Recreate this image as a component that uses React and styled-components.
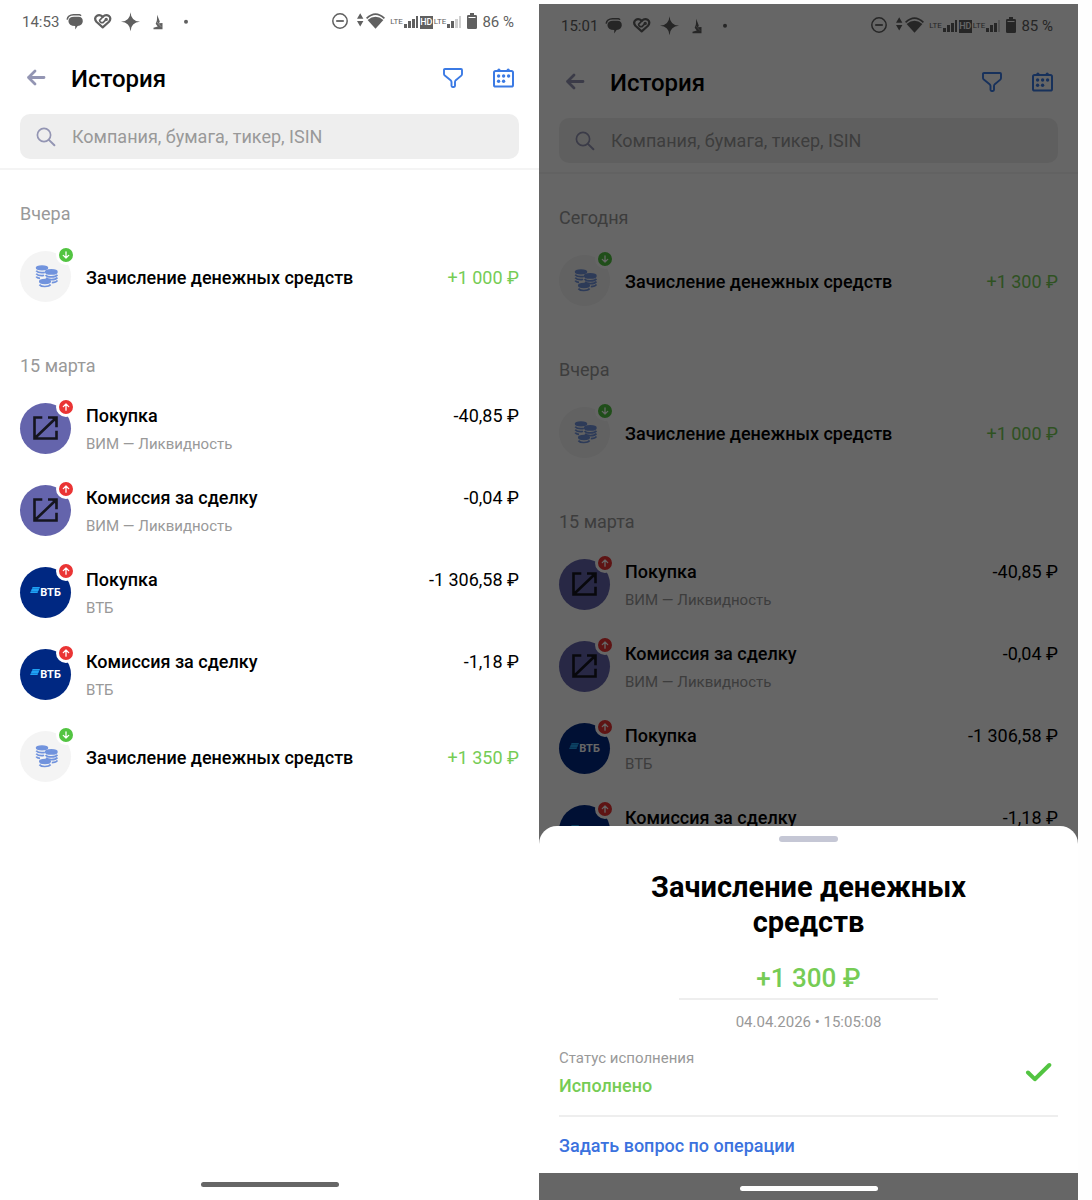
import React from 'react';
import styled, { createGlobalStyle } from 'styled-components';

const GlobalStyle = createGlobalStyle`
  * {
    box-sizing: border-box;
  }
  body {
    margin: 0;
    background: #fefefe;
    font-family: Roboto, 'Noto Sans', sans-serif;
    color: #000;
  }
`;

const Page = styled.main`
  display: grid;
  grid-template-columns: 1fr 1fr;
  min-height: 100vh;
  padding-right: 14px;
`;

const Phone = styled.section`
  position: relative;
  display: flex;
  flex-direction: column;
  overflow: hidden;
  margin-top: ${props => (props.$lowered ? '4px' : '0')};
  background: #fff;
`;

const StatusBar = styled.div`
  display: flex;
  justify-content: space-between;
  align-items: center;
  height: 44px;
  padding: 0 25px 0 22px;
  font-size: 15px;
  color: #606060;
`;

const StatusGroup = styled.div`
  display: flex;
  align-items: center;
  gap: ${props => props.$gap || '0'};

  svg {
    display: block;
    flex: none;
  }
`;

const Lte = styled.span`
  font-size: 8px;
  line-height: 12px;
`;

const Hd = styled.span`
  width: 13px;
  font-size: 9px;
  font-weight: 500;
  line-height: 13px;
  text-align: center;
  background: #606060;
  color: #fff;
`;

const Header = styled.header`
  padding: 0 20px 9px;
  border-bottom: 2px solid #f4f4f4;
`;

const Toolbar = styled.div`
  display: flex;
  align-items: center;
  height: 68px;
  margin-bottom: 2px;
`;

const Title = styled.h1`
  flex: 1;
  margin: 0 0 0 20px;
  padding-top: 2px;
  font-size: 24px;
  font-weight: 500;
  line-height: 28px;
`;

const IconButton = styled.button`
  display: flex;
  justify-content: center;
  align-items: center;
  width: 31px;
  height: 32px;
  margin-left: ${props => (props.$spaced ? '20px' : '0')};
  padding: 0;
  border: 0;
  background: none;
  color: ${props => props.$color};
`;

const SearchBox = styled.label`
  display: flex;
  align-items: center;
  gap: 16px;
  height: 45px;
  padding: 0 16px;
  border-radius: 10px;
  background: #eee;
  color: #9395b3;
`;

const SearchInput = styled.input`
  flex: 1;
  min-width: 0;
  padding: 0;
  border: 0;
  outline: 0;
  background: none;
  font: inherit;
  font-size: 18px;
  line-height: 28px;

  &::placeholder {
    color: #999;
    opacity: 1;
  }
`;

const Feed = styled.div`
  display: flex;
  flex-direction: column;
  gap: 28px;
  padding: 23px 20px;
`;

const DayTitle = styled.h2`
  margin: 0;
  font-size: 18px;
  font-weight: 400;
  line-height: 42px;
  color: #999;
`;

const Rows = styled.ul`
  margin: 0;
  padding: 0;
  list-style: none;
`;

const Row = styled.li`
  display: flex;
  align-items: center;
  gap: 15px;
  height: 82px;
`;

const Avatar = styled.div`
  position: relative;
  display: flex;
  justify-content: center;
  align-items: center;
  width: 51px;
  height: 51px;
  border-radius: 50%;
  background: ${props => props.$bg};
`;

const Badge = styled.span`
  position: absolute;
  top: -6px;
  right: -5px;
  display: flex;
  justify-content: center;
  align-items: center;
  width: 20px;
  height: 20px;
  border: 3px solid #fff;
  border-radius: 50%;
  background: ${props => (props.$incoming ? '#52c441' : '#ea3434')};
`;

const VtbMark = styled.span`
  display: flex;
  align-items: center;
  padding-top: 2px;
  font-size: 11px;
  font-weight: 700;
  line-height: 12px;
  color: #fff;

  svg {
    margin-bottom: 6px;
  }
`;

const RowBody = styled.div`
  flex: 1;
  padding-top: 4px;
`;

const RowLine = styled.div`
  display: flex;
  justify-content: space-between;
  font-size: 18px;
  line-height: 28px;
`;

const RowTitle = styled.span`
  font-weight: 500;
`;

const Amount = styled.span`
  color: ${props => (props.$incoming ? '#76cc55' : '#000')};
`;

const RowNote = styled.div`
  font-size: 15px;
  line-height: 28px;
  color: #999;
`;

const GestureBar = styled.div`
  display: flex;
  justify-content: center;
  align-items: center;
  height: 31px;
  margin-top: auto;

  &::after {
    content: '';
    width: 138px;
    height: 5px;
    border-radius: 3px;
    background: #666;
  }
`;

const Backdrop = styled.div`
  position: absolute;
  inset: 0;
  display: flex;
  flex-direction: column;
  justify-content: flex-end;
  background: rgba(0, 0, 0, 0.6);
`;

const BackdropGesture = styled(GestureBar)`
  height: 27px;
  margin-top: 0;
  padding-top: 4px;

  &::after {
    background: #fff;
  }
`;

const Sheet = styled.div`
  display: flex;
  flex-direction: column;
  padding: 10px 20px 13px;
  border-radius: 18px 18px 0 0;
  background: #fff;
`;

const Grip = styled.span`
  align-self: center;
  width: 59px;
  height: 6px;
  border-radius: 3px;
  background: #c5c7d5;
`;

const SheetTitle = styled.h2`
  width: 340px;
  max-width: 100%;
  margin: 28px auto 0;
  font-size: 29px;
  font-weight: 700;
  line-height: 35px;
  text-align: center;
`;

const SheetAmount = styled.div`
  align-self: center;
  min-width: 52%;
  margin-top: 20px;
  padding-bottom: 2px;
  border-bottom: 2px solid #eee;
  font-size: 26px;
  font-weight: 500;
  line-height: 36px;
  text-align: center;
  color: #76cc55;
`;

const SheetDate = styled.time`
  margin-top: 8px;
  font-size: 15px;
  line-height: 28px;
  text-align: center;
  color: #999;
`;

const StatusRow = styled.div`
  display: flex;
  justify-content: space-between;
  align-items: center;
  margin-top: 8px;
  padding: 0 6px 15px 0;
  border-bottom: 2px solid #eee;
`;

const StatusLabel = styled.div`
  font-size: 15px;
  line-height: 28px;
  color: #999;
`;

const StatusValue = styled.div`
  font-size: 18px;
  font-weight: 500;
  line-height: 28px;
  color: #76cc55;
`;

const AskLink = styled.a`
  align-self: flex-start;
  margin-top: 15px;
  font-size: 18px;
  font-weight: 500;
  line-height: 28px;
  text-decoration: none;
  color: #3b72de;
`;

const ArrowLeft = () => (
  <svg width="20" height="18" viewBox="0 0 20 18" fill="none" stroke="currentColor" strokeWidth="2.8" strokeLinecap="round" strokeLinejoin="round">
    <path d="M18 8.5H2.5M9 2L2.5 8.5L9 15" />
  </svg>
);

const FilterIcon = () => (
  <svg width="20" height="20" viewBox="0 0 20 20" fill="none" stroke="currentColor" strokeWidth="1.9" strokeLinejoin="round">
    <path d="M2 1H18Q19 1 19 2V6Q19 7 18.3 7.6L12.8 12.2Q12 13 12 14V17.8Q12 19 11 19H9.6Q8.5 19 8.5 17.8V14Q8.5 13 7.6 12.2L1.8 7.6Q1 7 1 6V2Q1 1 2 1Z" />
  </svg>
);

const CalendarIcon = () => (
  <svg width="21" height="20" viewBox="0 0 21 20" fill="currentColor">
    <rect x="1" y="2.9" width="19" height="15.6" rx="1.6" fill="none" stroke="currentColor" strokeWidth="2" />
    <path d="M4.3 3V2a1.6 1.6 0 0 1 3.2 0V3ZM13.6 3V2a1.6 1.6 0 0 1 3.2 0V3Z" />
    {[[5.6, 8], [10.6, 8], [15.6, 8], [5.6, 13.2], [10.6, 13.2]].map(([x, y]) => (
      <circle key={`${x}-${y}`} cx={x} cy={y} r="1.7" />
    ))}
  </svg>
);

const SearchIcon = () => (
  <svg width="20" height="20" viewBox="0 0 20 20" fill="none" stroke="currentColor" strokeWidth="1.7" strokeLinecap="round">
    <circle cx="8" cy="8" r="6.6" />
    <path d="M12.9 12.9L18.4 18.2" strokeWidth="2" />
  </svg>
);

const CheckIcon = () => (
  <svg width="27" height="20" viewBox="0 0 27 20" fill="none" stroke="#52c441" strokeWidth="4" strokeLinecap="round" strokeLinejoin="round">
    <path d="M3 10.5L9.8 17.2L24.3 3" />
  </svg>
);

const BadgeArrow = ({ down }) => (
  <svg width="8" height="8" viewBox="0 0 8 8" fill="none" stroke="#fff" strokeWidth="1.3" strokeLinecap="round" strokeLinejoin="round">
    <path d={down ? 'M4 .8V7M1.3 4.4L4 7L6.7 4.4' : 'M4 7.2V1M1.3 3.6L4 1L6.7 3.6'} />
  </svg>
);

const CoinsIcon = () => (
  <svg width="24" height="24" viewBox="-1 0 24 24" fill="none" stroke="#7193dd" strokeWidth="1.7">
    <ellipse cx="7" cy="3.8" rx="5.4" ry="1.8" fill="#7193dd" />
    <path d="M1.2 6.7Q3 8.9 7.5 8.7Q9 8.6 9.8 8.2M1.2 9.7Q3 11.8 7.5 11.6Q8.6 11.6 9 11.3M1.2 12.7Q2 14.2 5 14.4" />
    <path d="M10.6 11Q12 13 16.3 12.9Q21 12.8 22.4 10.8M11 13.9Q12.5 15.8 16.7 15.7Q21 15.6 22.4 13.6M16.8 18.6Q21.4 18.4 22.4 16.4" />
    <ellipse cx="16.3" cy="7.9" rx="5.6" ry="2" fill="#7193dd" />
    <ellipse cx="10" cy="17.5" rx="5.2" ry="1.9" fill="#7193dd" />
    <path d="M4.4 20.6Q6 22.6 10 22.5Q14.2 22.5 15.6 20.6" />
  </svg>
);

const VimIcon = () => (
  <svg width="25" height="24" viewBox="0 0 25 24" fill="none" stroke="#15151f" strokeWidth="2.6">
    <path d="M9.3 1.5H1.5V22.5H23.5V14.8M15 1.5H23.5V11.3M2 22L23 2" />
    <path d="M19 1.5H23.5V6Z" fill="#15151f" strokeWidth="1" />
  </svg>
);

const VtbStripes = () => (
  <svg width="10" height="6" viewBox="0 0 10 6" fill="#1fa2f5">
    <path d="M2.6 0H10L9.3 1.8H1.9ZM1.7 2.1H9.1L8.4 3.9H1ZM.8 4.2H8.2L7.5 6H.1Z" />
  </svg>
);

const SignalBars = ({ active }) => (
  <svg width="15" height="14" viewBox="0 0 15 14" fill="#606060">
    <rect x="0" y="9" width="3" height="4" opacity={active > 0 ? 1 : 0.3} />
    <rect x="4" y="6" width="3" height="7" opacity={active > 1 ? 1 : 0.3} />
    <rect x="8" y="4" width="3" height="9" opacity={active > 2 ? 1 : 0.3} />
    <rect x="12" y="1" width="2" height="12" opacity={active > 3 ? 1 : 0.3} />
  </svg>
);

const NotificationIcons = () => (
  <svg width="124" height="20" viewBox="0 0 124 20" fill="#606060">
    <path d="M4.4 9Q5 4.8 10 4.8H14.5Q18.8 5 18.8 9.2Q18.6 13.4 13.6 14L11.2 17.6V14Q4.6 14 4.4 9Z" />
    <path d="M3.2 7.6Q4 2.9 9.5 2.8H15.4Q16.4 3 17 3.8" fill="none" stroke="#606060" strokeWidth="1.6" />
    <g fill="none" stroke="#606060" strokeWidth="2.2" strokeLinecap="round" strokeLinejoin="round">
      <path d="M38.7 15.4L32.4 9.8Q29.8 6.4 32.6 4Q35.8 2 38.7 5Q41.6 2 45 4Q47.6 6.4 45 9.8Z" />
      <path d="M38.7 5L35.6 8.3Q36 11.2 39 10.6L42 7.6" strokeWidth="1.7" />
      <circle cx="42.2" cy="7.4" r="1" strokeWidth="1.4" />
    </g>
    <path d="M66.5 .2Q67 9.2 76 9.7Q67 10.2 66.5 19.2Q66 10.2 57 9.7Q66 9.2 66.5 .2Z" />
    <path d="M66.5 4.6Q67.8 8.4 71.6 9.7Q67.8 11 66.5 14.8Q65.2 11 61.4 9.7Q65.2 8.4 66.5 4.6Z" stroke="#606060" strokeWidth=".8" />
    <path d="M93.2 2.8L94 5L95.8 9.5L95 11.2L98.5 11V17.2H89.5V15.8L93.7 14.4L91.7 11.8L92.9 8.2Z" />
    <path d="M92.5 9.6L97.2 14.8" stroke="#fff" strokeWidth=".6" opacity=".6" />
    <circle cx="122" cy="9.7" r="2" />
  </svg>
);

const DndIcon = () => (
  <svg width="16" height="18" viewBox="0 0 16 18" fill="none" stroke="#606060" strokeWidth="1.5">
    <circle cx="8" cy="8" r="7.2" />
    <path d="M4.2 8H11.8" strokeWidth="1.8" />
  </svg>
);

const WifiIcon = () => (
  <svg width="28" height="18" viewBox="0 0 28 18" fill="#606060">
    <path d="M3.2 .2L6.4 5.8H0ZM3.2 13.6L6.4 8H0Z" />
    <path d="M18.5 15.8L10.6 7Q18.5 .4 26.4 7Z" />
    <path d="M9.6 5.4Q18.5-3.2 27.4 5.4" fill="none" stroke="#606060" strokeWidth="1.7" />
  </svg>
);

const BatteryIcon = () => (
  <svg width="10" height="18" viewBox="0 0 10 18" fill="#606060">
    <path d="M3 0H7V2H8.6Q10 2 10 3.2V14.7Q10 16 8.6 16H1.4Q0 16 0 14.7V3.2Q0 2 1.4 2H3Z" />
    <path d="M1.5 4.5H8.5" stroke="#fff" strokeWidth="1" />
  </svg>
);

const avatars = {
  coins: { bg: '#f4f4f4', mark: <CoinsIcon /> },
  vim: { bg: '#6464ac', mark: <VimIcon /> },
  vtb: { bg: '#002882', mark: <VtbMark><VtbStripes />ВТБ</VtbMark> },
};

const march15 = [
  { logo: 'vim', title: 'Покупка', note: 'ВИМ — Ликвидность', amount: '-40,85 ₽' },
  { logo: 'vim', title: 'Комиссия за сделку', note: 'ВИМ — Ликвидность', amount: '-0,04 ₽' },
  { logo: 'vtb', title: 'Покупка', note: 'ВТБ', amount: '-1 306,58 ₽' },
  { logo: 'vtb', title: 'Комиссия за сделку', note: 'ВТБ', amount: '-1,18 ₽' },
  { logo: 'coins', title: 'Зачисление денежных средств', amount: '+1 350 ₽' },
];

const yesterday = [{ logo: 'coins', title: 'Зачисление денежных средств', amount: '+1 000 ₽' }];
const today = [{ logo: 'coins', title: 'Зачисление денежных средств', amount: '+1 300 ₽' }];

const Operation = ({ logo, title, note, amount }) => {
  const incoming = amount.startsWith('+');
  return (
    <Row>
      <Avatar $bg={avatars[logo].bg}>
        {avatars[logo].mark}
        <Badge $incoming={incoming}>
          <BadgeArrow down={incoming} />
        </Badge>
      </Avatar>
      <RowBody>
        <RowLine>
          <RowTitle>{title}</RowTitle>
          <Amount $incoming={incoming}>{amount}</Amount>
        </RowLine>
        {note && <RowNote>{note}</RowNote>}
      </RowBody>
    </Row>
  );
};

const HistoryScreen = ({ time, battery, signal, days, lowered, children }) => (
  <Phone $lowered={lowered}>
    <StatusBar>
      <StatusGroup $gap="5px">
        {time}
        <NotificationIcons />
      </StatusGroup>
      <StatusGroup $gap="5px">
        <StatusGroup $gap="9px">
          <DndIcon />
          <WifiIcon />
        </StatusGroup>
        <StatusGroup $gap="1px">
          <Lte>LTE</Lte>
          <SignalBars active={4} />
          <Hd>HD</Hd>
          <Lte>LTE</Lte>
          <SignalBars active={signal} />
        </StatusGroup>
        <BatteryIcon />
        {battery}
      </StatusGroup>
    </StatusBar>
    <Header>
      <Toolbar>
        <IconButton $color="#9395b3" aria-label="Назад">
          <ArrowLeft />
        </IconButton>
        <Title>История</Title>
        <IconButton $color="#3b7ae4" aria-label="Фильтр">
          <FilterIcon />
        </IconButton>
        <IconButton $color="#3b7ae4" $spaced aria-label="Календарь">
          <CalendarIcon />
        </IconButton>
      </Toolbar>
      <SearchBox>
        <SearchIcon />
        <SearchInput type="text" aria-label="Поиск" placeholder="Компания, бумага, тикер, ISIN" />
      </SearchBox>
    </Header>
    <Feed>
      {days.map(day => (
        <section key={day.name}>
          <DayTitle>{day.name}</DayTitle>
          <Rows>
            {day.items.map((item, i) => (
              <Operation key={`${day.name}${i + 1}`} {...item} />
            ))}
          </Rows>
        </section>
      ))}
    </Feed>
    {children || <GestureBar />}
  </Phone>
);

const App = () => (
  <>
    <GlobalStyle />
    <Page>
      <HistoryScreen
        time="14:53"
        battery="86 %"
        signal={2}
        days={[{ name: 'Вчера', items: yesterday }, { name: '15 марта', items: march15 }]}
      />
      <HistoryScreen
        lowered
        time="15:01"
        battery="85 %"
        signal={3}
        days={[
          { name: 'Сегодня', items: today },
          { name: 'Вчера', items: yesterday },
          { name: '15 марта', items: march15.slice(0, 4) },
        ]}
      >
        <Backdrop>
          <Sheet role="dialog" aria-label="Операция">
            <Grip />
            <SheetTitle>Зачисление денежных средств</SheetTitle>
            <SheetAmount>+1 300 ₽</SheetAmount>
            <SheetDate>04.04.2026 • 15:05:08</SheetDate>
            <StatusRow>
              <div>
                <StatusLabel>Статус исполнения</StatusLabel>
                <StatusValue>Исполнено</StatusValue>
              </div>
              <CheckIcon />
            </StatusRow>
            <AskLink href="#ask">Задать вопрос по операции</AskLink>
          </Sheet>
          <BackdropGesture />
        </Backdrop>
      </HistoryScreen>
    </Page>
  </>
);

export default App;
